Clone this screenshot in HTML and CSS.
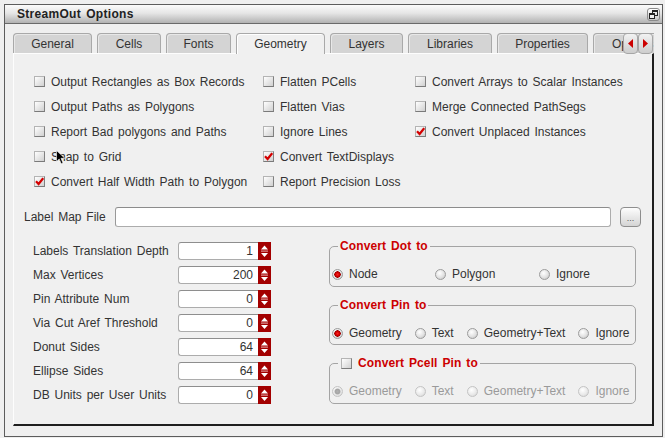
FILE: index.html
```html
<!DOCTYPE html>
<html>
<head>
<meta charset="utf-8">
<link rel="stylesheet" href="styles.css">
</head>
<body>
<div class="window">
  <div class="titlebar">
    <span class="title">StreamOut Options</span>
    <span class="restore"><svg width="11" height="11" viewBox="0 0 11 11"><rect x="4.5" y="1.5" width="5" height="5" fill="none" stroke="#222"/><rect x="4" y="1" width="6" height="2" fill="#222"/><rect x="1.5" y="4.5" width="5" height="5" fill="#eee" stroke="#222"/><rect x="1" y="4" width="6" height="2" fill="#222"/></svg></span>
  </div>
  <div class="tabbar">
    <div class="tabs">
      <div class="tab t-general">General</div>
      <div class="tab t-cells">Cells</div>
      <div class="tab t-fonts">Fonts</div>
      <div class="tab t-geometry active">Geometry</div>
      <div class="tab t-layers">Layers</div>
      <div class="tab t-libraries">Libraries</div>
      <div class="tab t-properties">Properties</div>
      <div class="tab t-options">Options</div>
    </div>
    <div class="tabscroll">
      <span class="sbtn"><svg width="5" height="9" viewBox="0 0 5 9"><polygon points="5,0 5,9 0,4.5" fill="#cc0000"/></svg></span>
      <span class="sbtn"><svg width="5" height="9" viewBox="0 0 5 9"><polygon points="0,0 0,9 5,4.5" fill="#cc0000"/></svg></span>
    </div>
  </div>
  <div class="panel">
    <div class="checks">
      <label class="chk"><span class="box"></span>Output Rectangles as Box Records</label>
      <label class="chk"><span class="box"></span>Flatten PCells</label>
      <label class="chk"><span class="box"></span>Convert Arrays to Scalar Instances</label>
      <label class="chk"><span class="box"></span>Output Paths as Polygons</label>
      <label class="chk"><span class="box"></span>Flatten Vias</label>
      <label class="chk"><span class="box"></span>Merge Connected PathSegs</label>
      <label class="chk"><span class="box"></span>Report Bad polygons and Paths</label>
      <label class="chk"><span class="box"></span>Ignore Lines</label>
      <label class="chk"><span class="box on"><svg width="9" height="9" viewBox="0 0 9 9"><path d="M1 4.2 L3.6 7 L8.2 1.2" fill="none" stroke="#d40000" stroke-width="2.2"/></svg></span>Convert Unplaced Instances</label>
      <label class="chk"><span class="box"></span>Snap to Grid</label>
      <label class="chk"><span class="box on"><svg width="9" height="9" viewBox="0 0 9 9"><path d="M1 4.2 L3.6 7 L8.2 1.2" fill="none" stroke="#d40000" stroke-width="2.2"/></svg></span>Convert TextDisplays</label>
      <span></span>
      <label class="chk"><span class="box on"><svg width="9" height="9" viewBox="0 0 9 9"><path d="M1 4.2 L3.6 7 L8.2 1.2" fill="none" stroke="#d40000" stroke-width="2.2"/></svg></span>Convert Half Width Path to Polygon</label>
      <label class="chk"><span class="box"></span>Report Precision Loss</label>
      <span></span>
    </div>

    <div class="maprow">
      <span class="maplabel">Label Map File</span>
      <span class="mapinput"></span>
      <span class="dots">...</span>
    </div>

    <div class="lower">
      <div class="fields">
        <div class="frow"><span class="flabel">Labels Translation Depth</span><span class="num">1</span><span class="spin"><svg width="13" height="18" viewBox="0 0 13 18"><polygon points="3,7.5 6.5,3.5 10,7.5" fill="#fff"/><rect x="3" y="8.6" width="7" height="1" fill="#e8b0b0"/><polygon points="3,11 10,11 6.5,15" fill="#fff"/></svg></span></div>
        <div class="frow"><span class="flabel">Max Vertices</span><span class="num">200</span><span class="spin"><svg width="13" height="18" viewBox="0 0 13 18"><polygon points="3,7.5 6.5,3.5 10,7.5" fill="#fff"/><rect x="3" y="8.6" width="7" height="1" fill="#e8b0b0"/><polygon points="3,11 10,11 6.5,15" fill="#fff"/></svg></span></div>
        <div class="frow"><span class="flabel">Pin Attribute Num</span><span class="num">0</span><span class="spin"><svg width="13" height="18" viewBox="0 0 13 18"><polygon points="3,7.5 6.5,3.5 10,7.5" fill="#fff"/><rect x="3" y="8.6" width="7" height="1" fill="#e8b0b0"/><polygon points="3,11 10,11 6.5,15" fill="#fff"/></svg></span></div>
        <div class="frow"><span class="flabel">Via Cut Aref Threshold</span><span class="num">0</span><span class="spin"><svg width="13" height="18" viewBox="0 0 13 18"><polygon points="3,7.5 6.5,3.5 10,7.5" fill="#fff"/><rect x="3" y="8.6" width="7" height="1" fill="#e8b0b0"/><polygon points="3,11 10,11 6.5,15" fill="#fff"/></svg></span></div>
        <div class="frow"><span class="flabel">Donut Sides</span><span class="num">64</span><span class="spin"><svg width="13" height="18" viewBox="0 0 13 18"><polygon points="3,7.5 6.5,3.5 10,7.5" fill="#fff"/><rect x="3" y="8.6" width="7" height="1" fill="#e8b0b0"/><polygon points="3,11 10,11 6.5,15" fill="#fff"/></svg></span></div>
        <div class="frow"><span class="flabel">Ellipse Sides</span><span class="num">64</span><span class="spin"><svg width="13" height="18" viewBox="0 0 13 18"><polygon points="3,7.5 6.5,3.5 10,7.5" fill="#fff"/><rect x="3" y="8.6" width="7" height="1" fill="#e8b0b0"/><polygon points="3,11 10,11 6.5,15" fill="#fff"/></svg></span></div>
        <div class="frow"><span class="flabel">DB Units per User Units</span><span class="num">0</span><span class="spin"><svg width="13" height="18" viewBox="0 0 13 18"><polygon points="3,7.5 6.5,3.5 10,7.5" fill="#fff"/><rect x="3" y="8.6" width="7" height="1" fill="#e8b0b0"/><polygon points="3,11 10,11 6.5,15" fill="#fff"/></svg></span></div>
      </div>

      <div class="groups">
        <fieldset class="grp g-dot">
          <legend>Convert Dot to</legend>
          <div class="radios grid3">
            <span class="rad"><span class="dot on"></span>Node</span>
            <span class="rad"><span class="dot"></span>Polygon</span>
            <span class="rad"><span class="dot"></span>Ignore</span>
          </div>
        </fieldset>
        <fieldset class="grp g-pin">
          <legend>Convert Pin to</legend>
          <div class="radios">
            <span class="rad"><span class="dot on"></span>Geometry</span>
            <span class="rad"><span class="dot"></span>Text</span>
            <span class="rad"><span class="dot"></span>Geometry+Text</span>
            <span class="rad"><span class="dot"></span>Ignore</span>
          </div>
        </fieldset>
        <fieldset class="grp g-pcell">
          <legend><span class="box"></span>Convert Pcell Pin to</legend>
          <div class="radios disabled">
            <span class="rad"><span class="dot on"></span>Geometry</span>
            <span class="rad"><span class="dot"></span>Text</span>
            <span class="rad"><span class="dot"></span>Geometry+Text</span>
            <span class="rad"><span class="dot"></span>Ignore</span>
          </div>
        </fieldset>
      </div>
    </div>
  </div>
</div>
<svg class="cursor" width="10" height="15" viewBox="0 0 10 15"><polygon points="0.5,0.5 0.5,11.5 3.2,9 5.2,13.8 7,13 5,8.3 8.8,8.3" fill="#000" stroke="#fff" stroke-width="0.6"/></svg>
</body>
</html>
```
FILE: styles.css
```css
html, body {
  margin: 0;
  padding: 0;
}
body {
  width: 665px;
  height: 438px;
  overflow: hidden;
  background: #efefef;
  font-family: "Liberation Sans", Arial, sans-serif;
  font-size: 12px;
  color: #333;
  word-spacing: 1.5px;
  position: relative;
}
.window {
  margin: 4px 0 0 4px;
  width: 657px;
  height: 431px;
  border: 1px solid #5c5c5c;
  background: #efefef;
}
.titlebar {
  height: 18px;
  border-bottom: 1px solid #6a6a6a;
  background: linear-gradient(#fbfbfb, #e6e6e6 45%, #b2b2b2);
  display: flex;
  align-items: center;
  justify-content: space-between;
  padding: 0 2px 0 12px;
}
.title {
  font-weight: bold;
  color: #222;
  letter-spacing: 0.3px;
  font-size: 12px;
}
.restore {
  width: 11px;
  height: 11px;
  border: 1px solid #8a8a8a;
  border-radius: 3px;
  background: linear-gradient(#ffffff, #c4c4c4);
  display: flex;
  align-items: center;
  justify-content: center;
}
.restore svg {
  display: block;
}

/* tabs */
.tabbar {
  margin: 9px 8px 0 8px;
  height: 20px;
  position: relative;
  z-index: 1;
}
.tabs {
  display: flex;
  gap: 5px;
  height: 21px;
  overflow: hidden;
}
.tab {
  box-sizing: border-box;
  height: 20px;
  flex: none;
  border: 1px solid #a9a9a9;
  border-bottom: none;
  border-radius: 4px 4px 0 0;
  background: #d4d4d4;
  box-shadow: inset 1px 1px 0 #e8e8e8;
  text-align: center;
  line-height: 20px;
  color: #333;
}
.tab.active {
  height: 21px;
  background: #f0f0f0;
  box-shadow: inset 1px 1px 0 #ffffff;
}
.t-general { width: 79px; }
.t-cells { width: 64px; }
.t-fonts { width: 65px; }
.t-geometry { width: 89px; }
.t-layers { width: 73px; }
.t-libraries { width: 84px; }
.t-properties { width: 91px; }
.t-options { width: 80px; text-align: left; padding-left: 18px; }
.tabscroll {
  position: absolute;
  right: 1px;
  top: 0;
  display: flex;
}
.sbtn {
  box-sizing: border-box;
  width: 15px;
  height: 21px;
  border: 1px solid #a6a6a6;
  border-radius: 4px;
  background: linear-gradient(#f2f2f2, #cdcdcd);
  display: flex;
  align-items: center;
  justify-content: center;
}
.sbtn svg { display: block; }

/* panel */
.panel {
  box-sizing: border-box;
  margin: 0 8px;
  height: 373px;
  border-top: 1px solid #fdfdfd;
  border-left: 1px solid #fdfdfd;
  border-right: 2px solid #1e1e1e;
  border-bottom: 2px solid #1e1e1e;
  background: #f0f0f0;
}
.checks {
  display: grid;
  grid-template-columns: 229px 152px 1fr;
  grid-auto-rows: 25px;
  padding: 15px 0 0 20px;
}
.chk {
  display: flex;
  align-items: center;
  gap: 6px;
  white-space: nowrap;
}
.box {
  box-sizing: border-box;
  width: 11px;
  height: 11px;
  flex: none;
  border: 1px solid;
  border-color: #b4b4b4 #808080 #7a7a7a #b4b4b4;
  background: linear-gradient(135deg, #ffffff, #d0d0d0);
  display: flex;
  align-items: center;
  justify-content: center;
}
.box svg { display: block; }

.maprow {
  display: flex;
  align-items: center;
  height: 20px;
  margin-top: 13px;
  padding: 0 11px 0 10px;
}
.maplabel {
  width: 91px;
  flex: none;
  white-space: nowrap;
}
.mapinput {
  flex: 1;
  box-sizing: border-box;
  height: 20px;
  background: #fff;
  border: 1px solid #acacac;
  border-top-color: #8c8c8c;
  border-left-color: #999;
  border-radius: 3px;
}
.dots {
  box-sizing: border-box;
  width: 21px;
  height: 20px;
  margin-left: 9px;
  border: 1px solid #8e8e8e;
  border-radius: 4px;
  background: linear-gradient(#fdfdfd, #d4d4d4);
  font-size: 9px;
  color: #555;
  text-align: center;
  line-height: 20px;
  letter-spacing: 0;
}

.lower {
  display: flex;
  margin-top: 12px;
  padding-left: 19px;
}
.fields {
  width: 296px;
  flex: none;
}
.frow {
  display: flex;
  align-items: center;
  height: 24px;
}
.flabel {
  width: 145px;
  flex: none;
  white-space: nowrap;
}
.num {
  box-sizing: border-box;
  width: 80px;
  height: 18px;
  background: #fff;
  border: 1px solid #acacac;
  border-top-color: #8e8e8e;
  border-right: none;
  border-radius: 3px 0 0 3px;
  text-align: right;
  padding-right: 5px;
  line-height: 17px;
}
.spin {
  width: 13px;
  height: 18px;
  background: #a30000;
}
.spin svg { display: block; }

.groups {
  width: 307px;
  flex: none;
}
.grp {
  margin: 0;
  padding: 13px 0 4px 2px;
  border: 1px solid #a4a4a4;
  border-radius: 5px;
  min-width: 0;
}
.grp legend {
  padding: 0 2px;
  margin-left: 6px;
  color: #cc0000;
  font-weight: bold;
  line-height: 14px;
  letter-spacing: 0.1px;
}
.g-pin {
  margin-top: 11px;
  padding-bottom: 3px;
}
.g-pcell {
  margin-top: 11px;
}
.g-pcell legend {
  display: flex;
  align-items: center;
  gap: 6px;
}
.g-pcell legend .box {
  margin-left: 1px;
}
.radios {
  display: flex;
  align-items: center;
  gap: 13px;
  height: 16px;
}
.radios.grid3 {
  display: grid;
  grid-template-columns: 103px 104px 1fr;
  gap: 0;
}
.rad {
  display: flex;
  align-items: center;
  gap: 6px;
  white-space: nowrap;
}
.dot {
  box-sizing: border-box;
  width: 11px;
  height: 11px;
  flex: none;
  border-radius: 50%;
  border: 1px solid #9c9c9c;
  background: radial-gradient(circle at 40% 35%, #ffffff, #e2e2e2 55%, #bdbdbd);
}
.dot.on {
  background: radial-gradient(circle at 50% 50%, #ff2020 0, #d00000 2px, #a00000 3px, transparent 3.4px),
              radial-gradient(circle at 40% 35%, #ffffff, #e2e2e2 55%, #bdbdbd);
}
.radios.disabled {
  color: #9a9a9a;
}
.radios.disabled .dot {
  border-color: #c4c4c4;
  background: radial-gradient(circle at 40% 35%, #ffffff, #eaeaea 55%, #d2d2d2);
}
.radios.disabled .dot.on {
  background: radial-gradient(circle at 50% 50%, #b0b0b0 0, #a4a4a4 2.5px, transparent 3.4px),
              radial-gradient(circle at 40% 35%, #ffffff, #eaeaea 55%, #d2d2d2);
}
.cursor {
  position: absolute;
  left: 56px;
  top: 150px;
}
```
